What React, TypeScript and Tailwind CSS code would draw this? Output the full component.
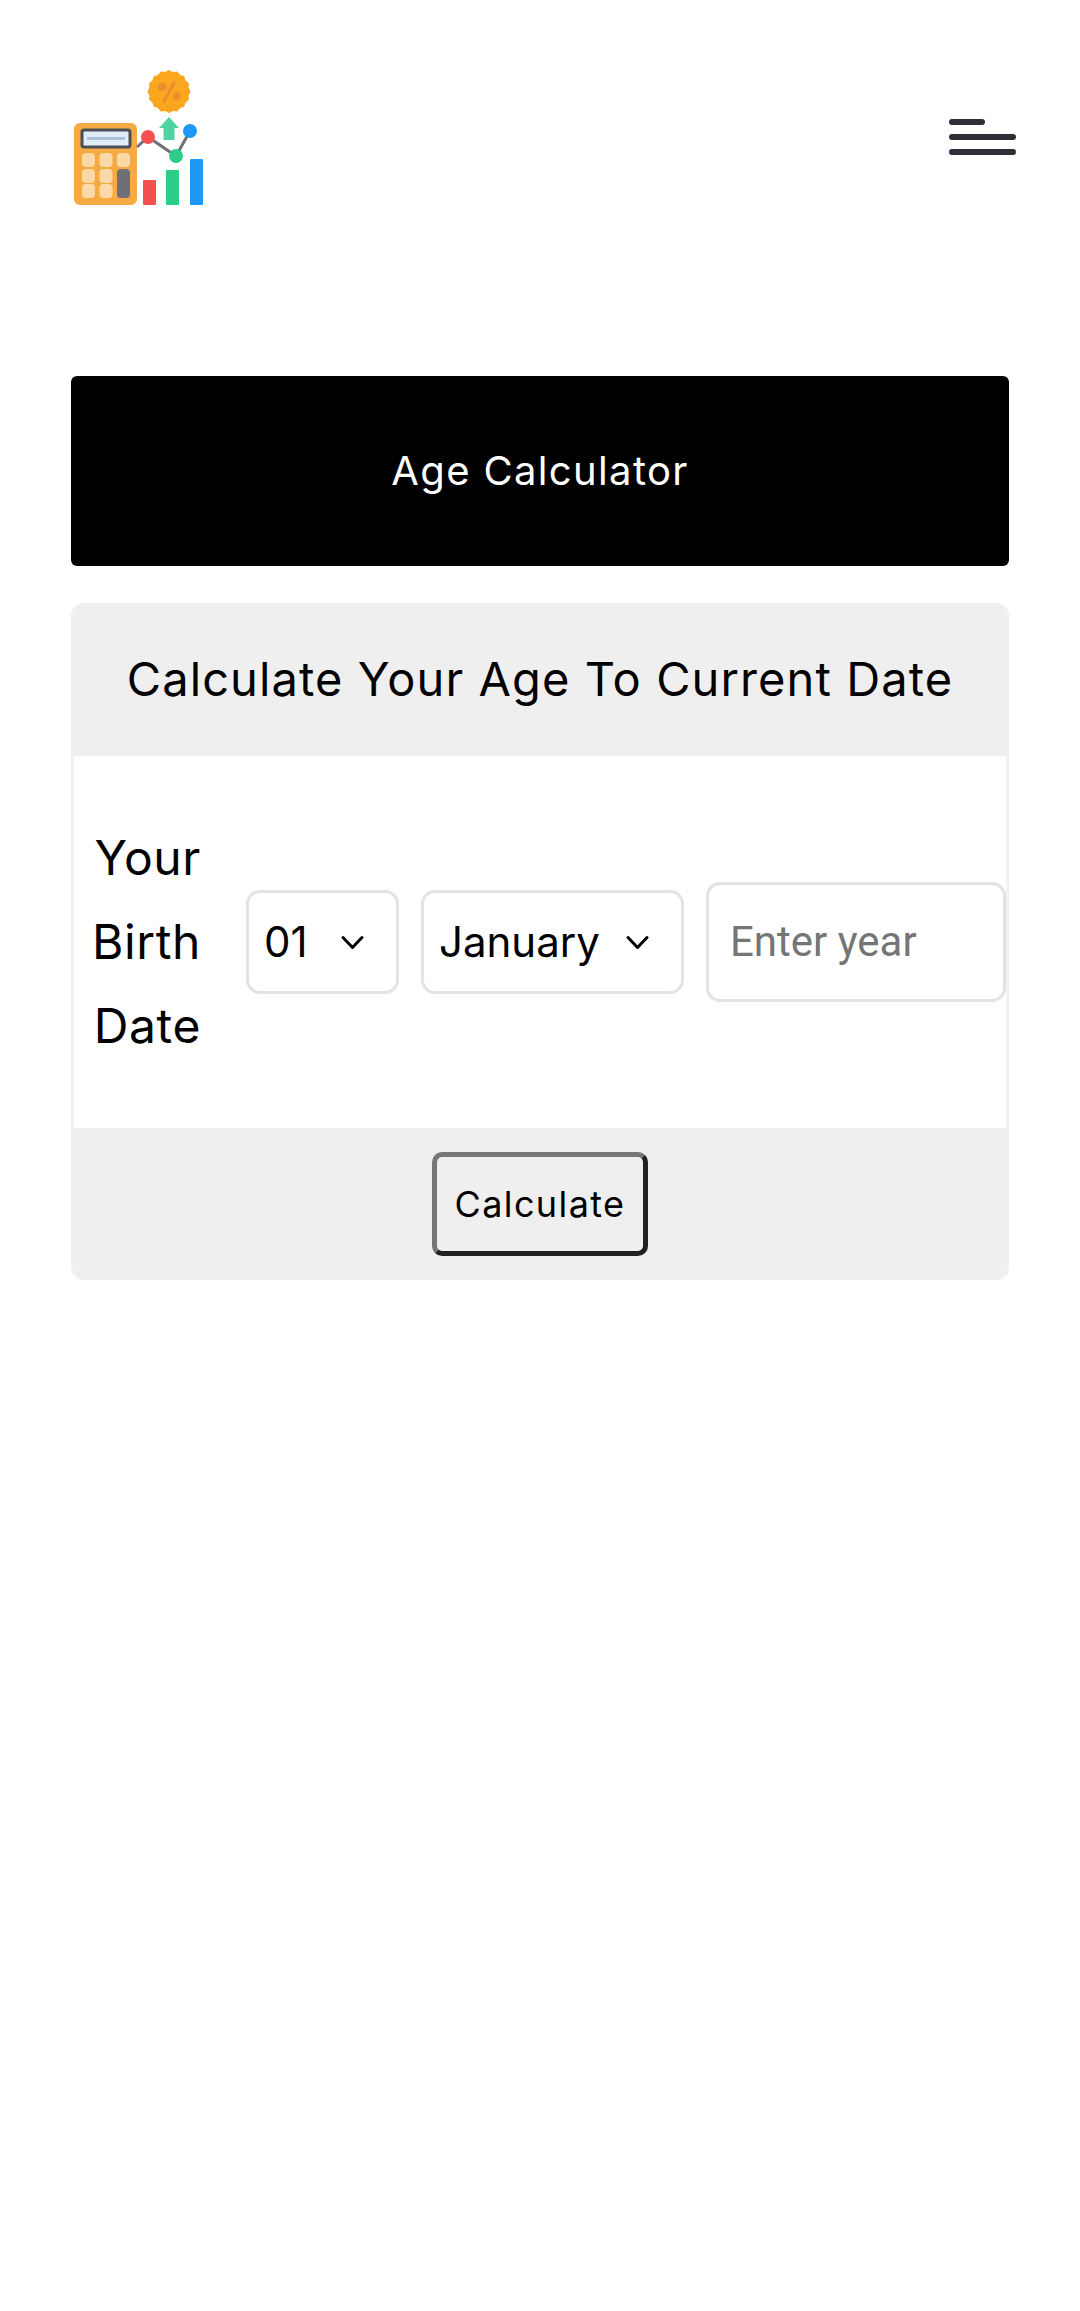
import React from 'react';

// scalloped edge of the percent badge
const coinPoints = Array.from({ length: 32 }, (_, i) => {
  const a = (i * Math.PI) / 16;
  const r = i % 2 === 0 ? 21.5 : 20;
  return `${(119 + r * Math.sin(a)).toFixed(1)},${(41.5 - r * Math.cos(a)).toFixed(1)}`;
}).join(' ');

const Logo = () => (
  <svg viewBox="0 0 180 180" className="w-[180px] h-[180px] shrink-0 -ml-[21px]">
    <polygon fill="#fba61f" points={coinPoints} />
    <line x1="124" y1="33" x2="114" y2="51" stroke="#e8912a" strokeWidth="3.5" strokeLinecap="round" />
    <circle cx="112" cy="37" r="4" fill="#e8912a" />
    <circle cx="127" cy="46" r="4" fill="#e8912a" />
    {/* up arrow */}
    <path d="M119 67 L129 78 L124.5 78 L124.5 90 L113.5 90 L113.5 78 L109 78 Z" fill="#4fd3a0" />
    {/* calculator */}
    <rect x="24" y="73" width="63" height="82" rx="6" fill="#f6ab42" />
    <rect x="32" y="80" width="48" height="17" rx="2" fill="#e1ecf9" stroke="#4d4f57" strokeWidth="3" />
    <rect x="37" y="87" width="38" height="3" fill="#a9c0de" />
    {[32, 49.5, 67].map((x) =>
      [103, 119, 134].map((y) =>
        x === 67 && y > 103 ? null : (
          <rect key={`${x}-${y}`} x={x} y={y} width="13" height="14" rx="4" fill="#fcd9a6" />
        ),
      ),
    )}
    <rect x="67" y="119" width="13" height="29" rx="4" fill="#706f78" />
    {/* line chart */}
    <polyline points="87,97 98,87 126,106 140,81" fill="none" stroke="#70727a" strokeWidth="3" />
    <circle cx="98" cy="87" r="7" fill="#f4504f" />
    <circle cx="126" cy="106" r="7" fill="#2dcd87" />
    <circle cx="140" cy="81" r="7" fill="#1e98f7" />
    {/* bars */}
    <rect x="93" y="130" width="13" height="25" rx="1" fill="#f4504f" />
    <rect x="116" y="120" width="13" height="35" rx="1" fill="#2dcd87" />
    <rect x="140" y="109" width="13" height="46" rx="1" fill="#1e98f7" />
  </svg>
);

const Chevron = () => (
  <svg
    viewBox="0 0 25 15"
    className="absolute right-[34px] top-1/2 -mt-[7px] w-[25px] h-[15px] pointer-events-none"
    fill="none"
    stroke="#000"
    strokeWidth="3"
    strokeLinecap="round"
    strokeLinejoin="round"
  >
    <path d="M3 2.5 L12.5 12.5 L22 2.5" />
  </svg>
);

const Select = ({ value, options, width }: { value: string; options: string[]; width: string }) => (
  <div className={`relative shrink-0 h-[104px] ${width}`}>
    <select
      defaultValue={value}
      className="w-full h-full appearance-none bg-white border-[3px] border-[#e3e3e3] rounded-[14px] pl-[15px] text-[42px] text-black outline-none"
    >
      {options.map((o) => (
        <option key={o}>{o}</option>
      ))}
    </select>
    <Chevron />
  </div>
);

export default function App() {
  return (
    <div className="w-[1080px] min-h-[2311px] bg-white font-['Inter',sans-serif] text-black">
      <header className="flex items-start justify-between pl-[71px] pr-[64px] h-[376px] pt-[50px]">
        <Logo />
        <div className="flex flex-col gap-[9px] w-[67px] mt-[69px]">
          <span className="block h-[6px] w-[36px] rounded-full bg-[#2c2f36]" />
          <span className="block h-[6px] w-full rounded-full bg-[#2c2f36]" />
          <span className="block h-[6px] w-full rounded-full bg-[#2c2f36]" />
        </div>
      </header>

      <main className="mx-[71px]">
        <div className="h-[190px] bg-black rounded-[6px] flex items-center justify-center text-white text-[40px] tracking-[1.35px]">
          Age Calculator
        </div>

        <section className="mt-[37px] rounded-[12px] overflow-hidden border-x-[3px] border-[#f1f1f1]">
          <div className="h-[153px] bg-[#efefef] flex items-center justify-center text-[47px] tracking-[1.1px]">
            Calculate Your Age To Current Date
          </div>

          <div className="h-[372px] flex items-center gap-[22px] pl-[13px] pb-[1px]">
            <div className="w-[137px] pr-[23px] shrink-0 text-right text-[48px] tracking-[0.6px] leading-[84px]">
              Your Birth Date
            </div>
            <Select value="01" options={['01', '02', '03']} width="w-[153px]" />
            <Select value="January" options={['January', 'February', 'March']} width="w-[263px]" />
            <input
              placeholder="Enter year"
              className="w-[300px] h-[120px] shrink-0 border-[3px] border-[#e3e3e3] rounded-[14px] pl-[21px] text-[42px] font-['Roboto',sans-serif] placeholder:text-[#757575] outline-none"
            />
          </div>

          <div className="h-[152px] bg-[#efefef] flex items-center justify-center">
            <button className="w-[216px] h-[104px] rounded-[10px] border-[5px] border-t-[#767676] border-l-[#767676] border-r-[#212121] border-b-[#212121] bg-[#efefef] text-[36px] tracking-[1.4px] text-black">
              Calculate
            </button>
          </div>
        </section>
      </main>
    </div>
  );
}
